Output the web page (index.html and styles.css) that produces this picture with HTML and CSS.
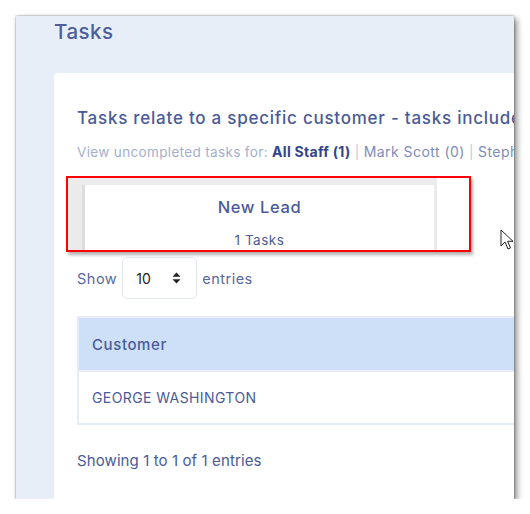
FILE: index.html
```html
<!DOCTYPE html>
<html>
<head>
<meta charset="utf-8">
<link rel="stylesheet" href="styles.css">
</head>
<body>
<div class="shot">
  <h1 class="page-title">Tasks</h1>
  <div class="card">
    <h2 class="intro">Tasks relate to a specific customer - tasks include reminders and follow ups</h2>
    <p class="filter">View uncompleted tasks for: <b>All Staff (1)</b> <span class="sep">|</span> <span class="staff">Mark Scott (0)</span> <span class="sep">|</span> <span class="staff">Stephen Smith (0)</span></p>
    <div class="annot">
      <div class="lead-wrap">
        <div class="lead-card">
          <div class="lead-name">New Lead</div>
          <div class="lead-count">1 Tasks</div>
        </div>
      </div>
    </div>
    <div class="length">
      <span>Show</span>
      <div class="select"><span>10</span>
        <svg class="updown" width="9" height="12" viewBox="0 0 9 12"><path d="M4.5 0.5 L8.5 4.8 H0.5 Z M4.5 11.5 L8.5 7.2 H0.5 Z" fill="#222"/></svg>
      </div>
      <span>entries</span>
    </div>
    <div class="table">
      <div class="thead">Customer</div>
      <div class="trow">GEORGE WASHINGTON</div>
    </div>
    <div class="info">Showing 1 to 1 of 1 entries</div>
  </div>
  <svg class="cursor" width="14" height="22" viewBox="0 0 14 22"><path d="M1 1 V17 L5 13 L8 20 L10.5 19 L7.6 12.3 H13 Z" fill="#fff" stroke="#222" stroke-width="1" stroke-linejoin="round"/></svg>
</div>
</body>
</html>
```
FILE: styles.css
```css
html, body { margin: 0; padding: 0; background: #ffffff; }
body { font-family: "Inter", "Open Sans", sans-serif; }
.shot {
  position: relative;
  margin: 16px 0 0 16px;
  width: 498px;
  height: 483px;
  overflow: hidden;
  background: #e8eef7;
  box-shadow: 0 0 2px rgba(0,0,0,0.45), 3px 3px 6px rgba(0,0,0,0.45);
}
.page-title {
  margin: 0;
  padding: 4px 0 0 38px;
  height: 53px;
  box-sizing: border-box;
  font-size: 20.5px;
  letter-spacing: 0.5px;
  line-height: 24px;
  font-weight: 500;
  color: #4c5e9c;
}
.card {
  margin-left: 38px;
  margin-top: 4px;
  width: 700px;
  height: 440px;
  background: #fff;
  border-radius: 4px 0 0 0;
  padding: 33px 0 0 23px;
  box-sizing: border-box;
}
.intro {
  margin: 0;
  font-size: 17px;
  letter-spacing: 0.75px;
  line-height: 24px;
  font-weight: 500;
  color: #4a5b98;
  white-space: nowrap;
}
.filter {
  margin: 14px 0 0;
  font-size: 13.5px;
  letter-spacing: 0.35px;
  line-height: 16px;
  color: #a3afcb;
  white-space: nowrap;
}
.filter b { color: #34448a; font-weight: 700; font-size: 14px; letter-spacing: 0.3px; }
.filter .staff { color: #7d8cb8; font-size: 14px; letter-spacing: 0.45px; }
.filter .sep { color: #c2c8d4; }
.annot {
  margin: 16px 0 0 -11px;
  width: 405px;
  height: 76px;
  box-sizing: border-box;
  border: 2px solid #f00;
  box-shadow: 2px 3px 3px rgba(0,0,0,0.3);
  display: flex;
}
.lead-wrap {
  width: 369px;
  height: 100%;
  background: #ebebeb;
  padding: 7px 3px 0 14px;
  box-sizing: border-box;
  display: flex;
}
.lead-card {
  flex: 1;
  background: #fff;
  border-left: 3px solid #dcdcdc;
  text-align: center;
  color: #4a5b98;
}
.lead-name { margin-top: 11px; font-size: 16.5px; letter-spacing: 0.6px; line-height: 22px; font-weight: 500; }
.lead-count { margin-top: 13px; font-size: 13.5px; letter-spacing: 0.5px; line-height: 18px; }
.length {
  margin-top: 5px;
  display: flex;
  align-items: center;
  gap: 5px;
  font-size: 14.5px;
  letter-spacing: 0.5px;
  color: #5868a2;
}
.select {
  width: 75px;
  height: 42px;
  box-sizing: border-box;
  border: 1px solid #e3e8ef;
  border-radius: 5px;
  display: flex;
  align-items: center;
  justify-content: space-between;
  padding: 0 15px 0 13px;
  color: #222;
  font-size: 14px;
  letter-spacing: 0;
}
.table {
  margin-top: 17px;
  border: 2px solid #e6edf8;
  border-right: none;
}
.thead {
  height: 52px;
  background: #cde0f8;
  border-bottom: 2px solid #e6edf8;
  padding-left: 13px;
  display: flex;
  align-items: center;
  font-size: 15px;
  letter-spacing: 0.6px;
  font-weight: 500;
  color: #4a5b98;
}
.trow {
  height: 51px;
  padding-left: 13px;
  display: flex;
  align-items: center;
  font-size: 14px;
  letter-spacing: 0.4px;
  color: #4a5b98;
}
.info {
  margin-top: 26px;
  font-size: 15px;
  letter-spacing: 0.1px;
  color: #4a5b98;
}
.cursor { position: absolute; left: 484px; top: 213px; }
```
